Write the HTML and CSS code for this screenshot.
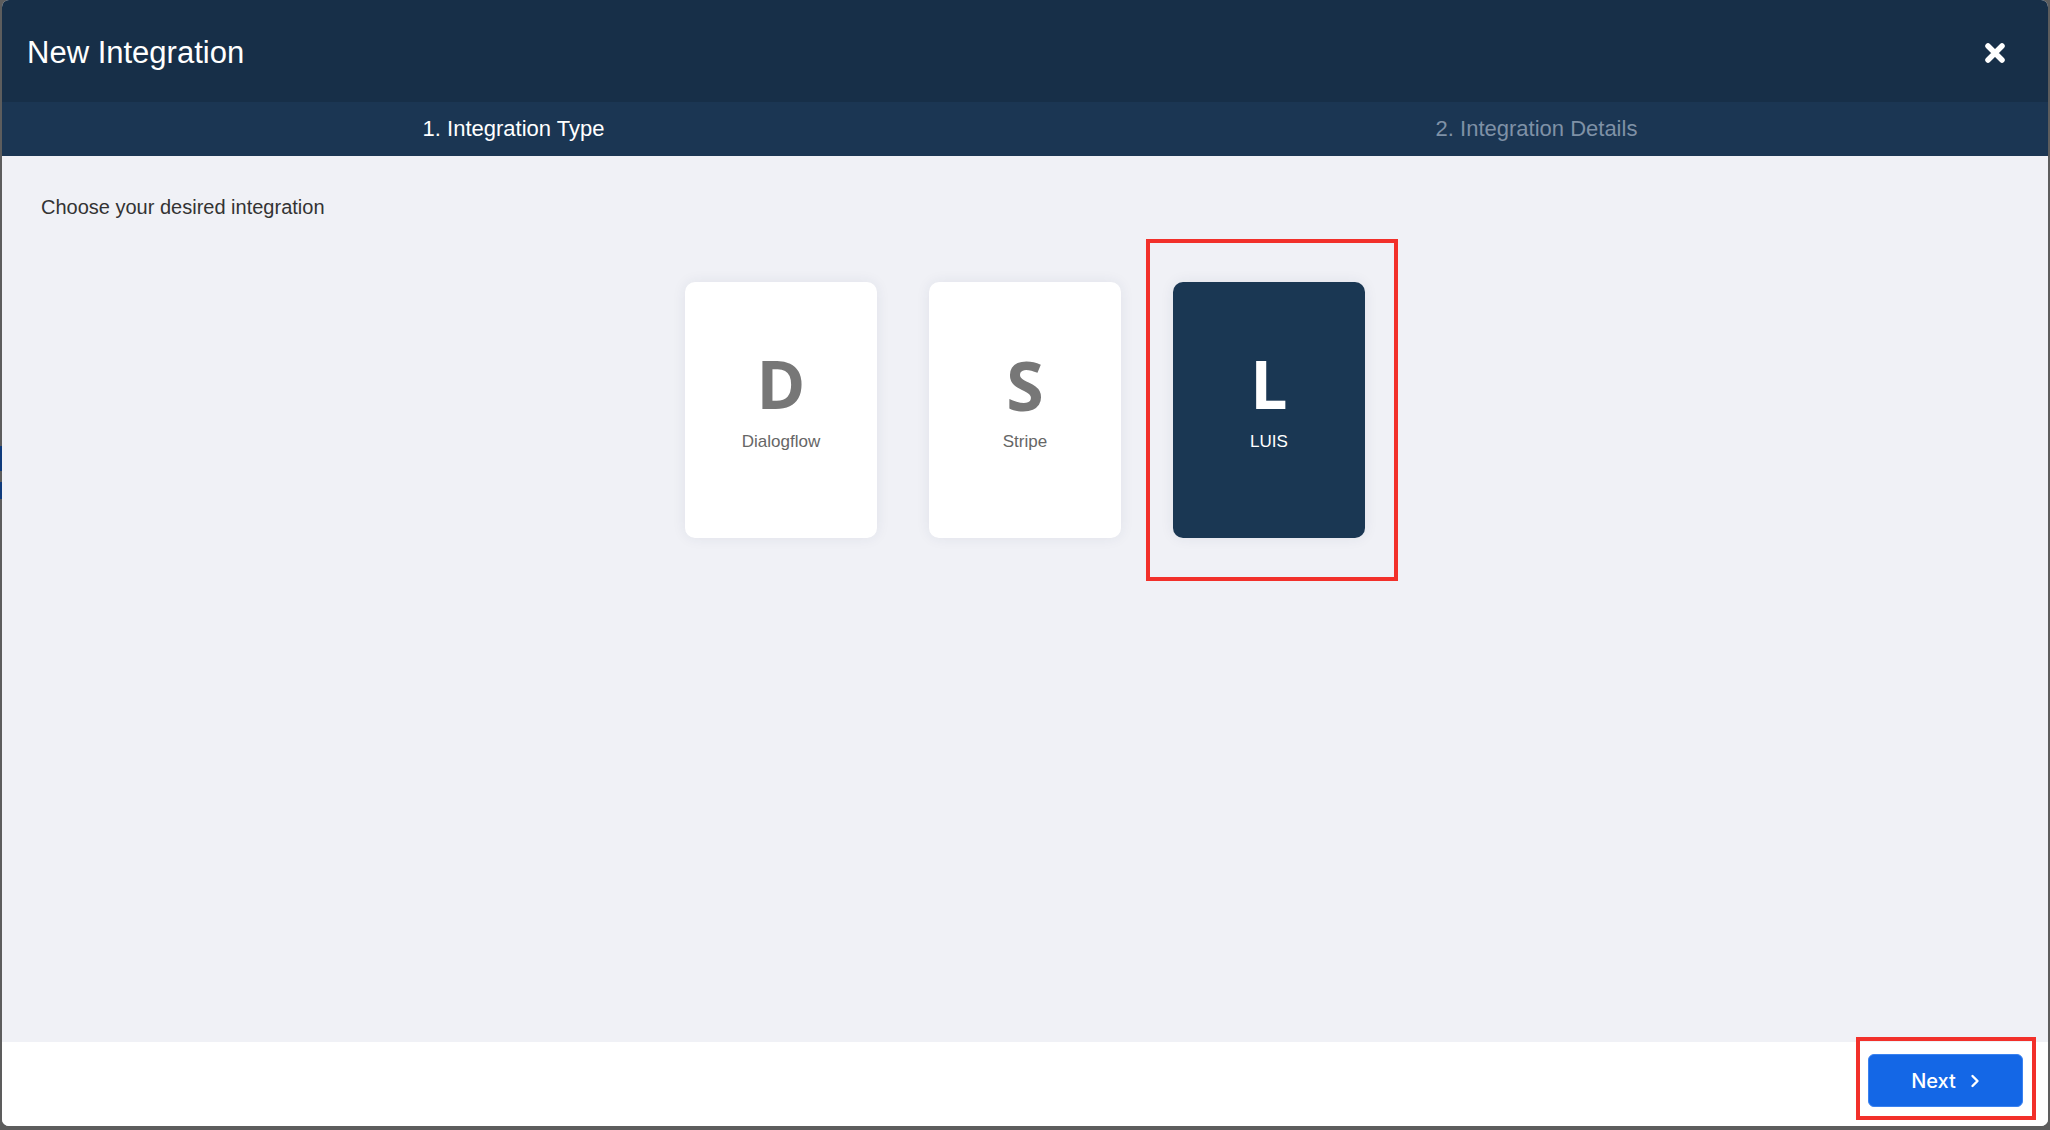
FILE: index.html
```html
<!DOCTYPE html>
<html lang="en">
<head>
    <meta charset="UTF-8">
    <meta name="viewport" content="width=device-width, initial-scale=1.0">
    <title>New Integration</title>
    <link rel="stylesheet" href="styles.css">
</head>
<body>

    <!-- bits of the page behind the modal -->
    <span class="peek peek-a"></span>
    <span class="peek peek-b"></span>

    <div class="modal">
        <header class="modal-header">
            <h1>New Integration</h1>
            <button class="close-btn" aria-label="Close">
                <svg width="22" height="22" viewBox="0 0 22 22">
                    <path d="M4 4 L18 18 M18 4 L4 18" stroke="#fff" stroke-width="5.5" stroke-linecap="round" fill="none"/>
                </svg>
            </button>
        </header>

        <nav class="steps">
            <div class="step active">1. Integration Type</div>
            <div class="step">2. Integration Details</div>
        </nav>

        <main class="modal-body">
            <p class="hint">Choose your desired integration</p>
            <div class="cards">
                <div class="card">
                    <div class="letter">D</div>
                    <div class="name">Dialogflow</div>
                </div>
                <div class="card">
                    <div class="letter low">S</div>
                    <div class="name">Stripe</div>
                </div>
                <div class="card selected">
                    <div class="letter">L</div>
                    <div class="name">LUIS</div>
                </div>
            </div>
        </main>

        <footer class="modal-footer">
            <button class="next-btn">
                Next
                <svg width="10" height="14" viewBox="0 0 10 14">
                    <path d="M2.5 2 L7.5 7 L2.5 12" stroke="#fff" stroke-width="2.4" stroke-linecap="round" stroke-linejoin="round" fill="none"/>
                </svg>
            </button>
        </footer>
    </div>

    <!-- annotation boxes drawn over the screenshot -->
    <div class="mark mark-card"></div>
    <div class="mark mark-next"></div>

</body>
</html>
```

FILE: styles.css
```css
body {
    margin: 0;
    height: 1130px;
    overflow: hidden;
    background: #5d5d5d;
    font-family: "Liberation Sans", Arial, sans-serif;
}
.peek {
    position: absolute;
    left: 0;
    width: 2px;
    background: #0f3b7c;
}
.peek-a {
    top: 446px;
    height: 25px;
}
.peek-b {
    top: 482px;
    height: 17px;
}
.modal {
    margin-left: 2px;
    width: 2046px;
    height: 1126px;
    border-radius: 7px;
    overflow: hidden;
    display: flex;
    flex-direction: column;
    background: #fff;
}
.modal-header {
    height: 102px;
    flex-shrink: 0;
    box-sizing: border-box;
    padding: 4px 42px 0 25px;
    display: flex;
    align-items: center;
    justify-content: space-between;
    background: #172f48;
}
.modal-header h1 {
    margin: 0;
    font-size: 31px;
    font-weight: 400;
    color: #fff;
}
.close-btn {
    width: 22px;
    height: 22px;
    padding: 0;
    border: 0;
    background: none;
    cursor: pointer;
}
.close-btn svg {
    display: block;
}
.steps {
    height: 54px;
    flex-shrink: 0;
    display: flex;
    background: #1b3653;
}
.step {
    flex: 1;
    display: flex;
    align-items: center;
    justify-content: center;
    font-size: 22px;
    color: #7f91a6;
}
.step.active {
    color: #fff;
}
.modal-body {
    flex: 1;
    padding-top: 40px;
    background: #f0f1f6;
}
.hint {
    margin: 0 0 0 39px;
    font-size: 20px;
    line-height: 23px;
    color: #333;
}
.cards {
    display: flex;
    justify-content: center;
    gap: 52px;
    margin-top: 63px;
}
.card {
    width: 192px;
    height: 256px;
    box-sizing: border-box;
    padding-top: 68px;
    display: flex;
    flex-direction: column;
    align-items: center;
    background: #fff;
    border-radius: 10px;
    box-shadow: 0 0 14px rgba(40, 50, 90, 0.08);
}
.card.selected {
    background: #1a3753;
}
.letter {
    height: 66px;
    margin-bottom: 16px;
    font-family: "Open Sans", sans-serif;
    font-weight: 700;
    font-size: 66px;
    line-height: 66px;
    color: #777;
}
.letter.low {
    height: 69px;
    margin-bottom: 13px;
    font-size: 68px;
    line-height: 69px;
}
.name {
    font-size: 17px;
    line-height: 20px;
    color: #666;
}
.selected .letter,
.selected .name {
    color: #fff;
}
.modal-footer {
    height: 84px;
    flex-shrink: 0;
    box-sizing: border-box;
    padding: 12px 25px 0 0;
    display: flex;
    justify-content: flex-end;
    align-items: flex-start;
    background: #fff;
}
.next-btn {
    width: 155px;
    height: 53px;
    display: flex;
    align-items: center;
    justify-content: center;
    gap: 14px;
    border: 1px solid #3a82f0;
    border-radius: 6px;
    background: #1467e6;
    color: #fff;
    font-family: Inter, sans-serif;
    font-size: 20px;
    font-weight: 500;
    cursor: pointer;
}
.mark {
    position: absolute;
    box-sizing: border-box;
    border: 4px solid #f2302a;
}
.mark-card {
    left: 1146px;
    top: 239px;
    width: 252px;
    height: 342px;
}
.mark-next {
    left: 1856px;
    top: 1037px;
    width: 180px;
    height: 83px;
}
```
